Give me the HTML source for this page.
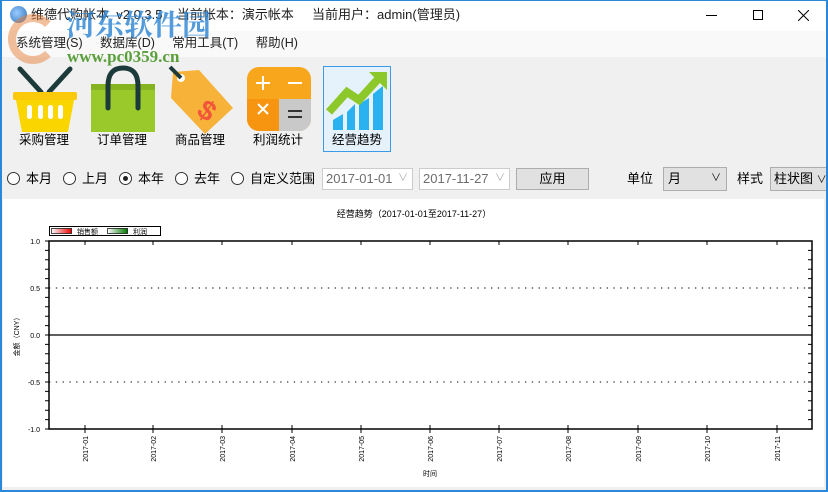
<!DOCTYPE html>
<html><head><meta charset="utf-8"><style>
*{margin:0;padding:0;box-sizing:border-box}
body{width:828px;height:492px;overflow:hidden;background:#f0f0f0;font-family:"Liberation Sans","Noto Sans CJK SC",sans-serif;font-size:12px;color:#000;position:relative;line-height:1.2}
.abs{position:absolute;white-space:nowrap}
.title{left:0;top:0;width:828px;height:31px;background:#fff;border-top:1px solid #2b88d8}
.menu{left:1px;top:31px;width:826px;height:26px;background:#f9f9f9}
.tb{top:57px;left:1px;width:826px;height:102px;background:#f0f0f0}
.lbl{font-size:12.5px;text-align:center;width:70px}
.wm{font-family:"Liberation Serif","Noto Serif CJK SC",serif;font-weight:bold}
.radio{width:13px;height:13px;border:1px solid #333;border-radius:50%;background:#fff}
.t13{font-size:13px;line-height:16px}
.combo{height:22px;border:1px solid #ccc;background:#fff;color:#6d6d6d;font-size:13px;padding:2px 3px;line-height:16px}
.btn{border:1px solid #adadad;background:#e1e1e1;text-align:center;font-size:13px;line-height:16px}
</style></head><body>
<div class="abs title"></div>
<div class="abs" style="left:10px;top:6px;width:17px;height:17px;border-radius:50%;background:radial-gradient(circle at 40% 40%,#9cf,#2a6fb8)"></div>
<div class="abs" style="left:31px;top:7px;font-size:13px;color:#222">维德代购帐本&nbsp; v2.0.3.5&nbsp;&nbsp;&nbsp; 当前帐本：演示帐本&nbsp;&nbsp;&nbsp;&nbsp; 当前用户：admin(管理员)</div>
<div class="abs" style="left:706px;top:15px;width:11px;height:1px;background:#000"></div>
<div class="abs" style="left:753px;top:10px;width:10px;height:10px;border:1px solid #000"></div>
<svg class="abs" style="left:798px;top:10px" width="11" height="11"><path d="M0 0L11 11M11 0L0 11" stroke="#000" stroke-width="1"/></svg>
<div class="abs menu"></div>
<div class="abs" style="left:16px;top:36px;font-size:12.5px;color:#222">系统管理(S)&nbsp;&nbsp;&nbsp;&nbsp; 数据库(D)&nbsp;&nbsp;&nbsp;&nbsp; 常用工具(T)&nbsp;&nbsp;&nbsp;&nbsp; 帮助(H)</div>
<div class="abs tb"></div>
<!-- watermark -->
<div class="abs" style="left:8px;top:14px;width:50px;height:50px;border-radius:50%;border:8px solid rgba(230,130,60,.5);border-right-color:transparent"></div>
<div class="abs wm" style="left:66px;top:10px;font-size:29px;line-height:32px;color:rgba(40,130,210,.8)">河东软件园</div>
<div class="abs wm" style="left:67px;top:48px;font-size:17px;line-height:18px;color:#5aa03a">www.pc0359.cn</div>
<!-- icons -->
<svg class="abs" style="left:10px;top:64px" width="70" height="70">
<path d="M10 5 L31 28 M60 5 L39 28" stroke="#1d3a3a" stroke-width="5" stroke-linecap="round"/>
<rect x="3" y="28" width="64" height="8" rx="2" fill="#f9c90a"/>
<path d="M6 36 H64 L58 68 H12 Z" fill="#fbd500"/>
<rect x="17" y="41" width="5" height="14" rx="2.5" fill="#fff"/><rect x="28" y="41" width="5" height="14" rx="2.5" fill="#fff"/><rect x="38" y="41" width="5" height="14" rx="2.5" fill="#fff"/><rect x="48" y="41" width="5" height="14" rx="2.5" fill="#fff"/>
</svg>
<svg class="abs" style="left:90px;top:64px" width="66" height="70">
<rect x="1" y="20" width="64" height="48" fill="#99c92b"/><rect x="1" y="20" width="64" height="6" fill="#86b320"/>
<path d="M18 44 V22 Q18 4 33 4 Q48 4 48 22 V44" fill="none" stroke="#1d3a3a" stroke-width="5" stroke-linecap="round"/>
</svg>
<svg class="abs" style="left:165px;top:64px" width="70" height="72">
<path d="M8 8 L34 6 L68 44 L40 70 L6 34 Z" fill="#f7b23a"/>
<circle cx="16" cy="14" r="4" fill="#fff"/><path d="M5 3 L16 14" stroke="#1d3a3a" stroke-width="4"/>
<text x="37" y="52" font-size="28" font-weight="bold" fill="#f3553a" transform="rotate(35 37 40)" font-family="Liberation Sans">$</text>
</svg>
<svg class="abs" style="left:247px;top:67px" width="64" height="64">
<defs><clipPath id="c"><rect width="64" height="64" rx="12"/></clipPath></defs>
<g clip-path="url(#c)"><rect width="64" height="64" fill="#f8a61c"/><rect x="32" y="32" width="32" height="32" fill="#c9c9c9"/><rect x="0" y="32" width="32" height="32" fill="#f79410"/></g>
<path d="M16 9 V23 M9 16 H23 M41 16 H55 M11 37 L21 47 M21 37 L11 47" stroke="#fff" stroke-width="2"/>
<path d="M41 44 H55 M41 50 H55" stroke="#333" stroke-width="2"/>
</svg>
<div class="abs" style="left:323px;top:66px;width:68px;height:86px;border:1px solid #3c9ae6;background:#e5f1fb"></div>
<svg class="abs" style="left:325px;top:68px" width="66" height="64">
<path d="M22 62 V44 L30 36 V62Z M34 62 V36 L44 30 V62Z M48 62 V26 L58 18 V62Z M8 62 V52 L18 46 V62Z" fill="#2ab2f0"/>
<path d="M4 44 L22 24 L34 32 L54 10" fill="none" stroke="#8cc82a" stroke-width="8"/>
<path d="M44 4 H62 V22 Z" fill="#8cc82a"/>
</svg>
<div class="abs lbl" style="left:9px;top:133px">采购管理</div>
<div class="abs lbl" style="left:87px;top:133px">订单管理</div>
<div class="abs lbl" style="left:165px;top:133px">商品管理</div>
<div class="abs lbl" style="left:243px;top:133px">利润统计</div>
<div class="abs lbl" style="left:322px;top:133px">经营趋势</div>
<!-- filter row -->
<div class="abs radio" style="left:7px;top:172px"></div><div class="abs t13" style="left:26px;top:171px">本月</div>
<div class="abs radio" style="left:63px;top:172px"></div><div class="abs t13" style="left:82px;top:171px">上月</div>
<div class="abs radio" style="left:119px;top:172px"></div><div class="abs" style="left:123px;top:176px;width:5px;height:5px;border-radius:50%;background:#222"></div><div class="abs t13" style="left:138px;top:171px">本年</div>
<div class="abs radio" style="left:175px;top:172px"></div><div class="abs t13" style="left:194px;top:171px">去年</div>
<div class="abs radio" style="left:231px;top:172px"></div><div class="abs t13" style="left:250px;top:171px">自定义范围</div>
<div class="abs combo" style="left:322px;top:168px;width:91px">2017-01-01 <span style="position:absolute;right:4px;top:2px;color:#aaa;font-size:10px">∨</span></div>
<div class="abs combo" style="left:419px;top:168px;width:91px">2017-11-27 <span style="position:absolute;right:4px;top:2px;color:#aaa;font-size:10px">∨</span></div>
<div class="abs btn" style="left:516px;top:168px;width:73px;height:22px;padding-top:2px">应用</div>
<div class="abs t13" style="left:627px;top:171px">单位</div>
<div class="abs btn" style="left:663px;top:167px;width:64px;height:24px;text-align:left;padding:3px 4px">月<span style="position:absolute;right:5px;top:3px;font-size:10px">∨</span></div>
<div class="abs t13" style="left:737px;top:171px">样式</div>
<div class="abs btn" style="left:770px;top:167px;width:62px;height:24px;text-align:left;padding:3px 3px">柱状图 <span style="font-size:10px">∨</span></div>
<!-- chart -->
<div class="abs" style="left:3px;top:199px;width:821px;height:288px;background:#fff"></div>
<svg class="abs" style="left:0;top:0" width="828" height="492" font-family="Liberation Sans,Noto Sans CJK SC,sans-serif">
<text x="414" y="217" font-size="9" text-anchor="middle">经营趋势（2017-01-01至2017-11-27）</text>
<rect x="49.5" y="226.5" width="111" height="9" fill="#fff" stroke="#000"/>
<defs><linearGradient id="r"><stop offset="0" stop-color="#fff"/><stop offset="1" stop-color="#e00"/></linearGradient><linearGradient id="g"><stop offset="0" stop-color="#fff"/><stop offset="1" stop-color="#070"/></linearGradient></defs>
<rect x="51.5" y="228.5" width="20" height="5" fill="url(#r)" stroke="#000" stroke-width=".7"/>
<text x="77" y="234" font-size="7">销售额</text>
<rect x="107.5" y="228.5" width="20" height="5" fill="url(#g)" stroke="#000" stroke-width=".7"/>
<text x="133" y="234" font-size="7">利润</text>
<rect x="49" y="241" width="763" height="188" fill="none" stroke="#000" stroke-width="1.5"/>
<line x1="49" y1="335" x2="812" y2="335" stroke="#000" stroke-width="1.3"/>
<line x1="49" y1="288" x2="812" y2="288" stroke="#000" stroke-dasharray="1.3 5.5"/>
<line x1="49" y1="382" x2="812" y2="382" stroke="#000" stroke-dasharray="1.3 5.5"/>
<g stroke="#000" stroke-width="1">
<path d="M45 250.4h4M45 259.8h4M45 269.2h4M45 278.6h4M45 288h4M45 297.4h4M45 306.8h4M45 316.2h4M45 325.6h4M45 335h4M45 344.4h4M45 353.8h4M45 363.2h4M45 372.6h4M45 382h4M45 391.4h4M45 400.8h4M45 410.2h4M45 419.6h4M45 241h4M45 429h4"/>
<path d="M808 250.4h4M808 259.8h4M808 269.2h4M808 278.6h4M808 288h4M808 297.4h4M808 306.8h4M808 316.2h4M808 325.6h4M808 335h4M808 344.4h4M808 353.8h4M808 363.2h4M808 372.6h4M808 382h4M808 391.4h4M808 400.8h4M808 410.2h4M808 419.6h4"/>
<path d="M85 241v4M153 241v4M222 241v4M292 241v4M361 241v4M430 241v4M499 241v4M568 241v4M638 241v4M707 241v4M777 241v4"/>
<path d="M85 425v8M153 425v8M222 425v8M292 425v8M361 425v8M430 425v8M499 425v8M568 425v8M638 425v8M707 425v8M777 425v8"/>
</g>
<g font-size="7" text-anchor="end">
<text x="40" y="244">1.0</text><text x="40" y="291">0.5</text><text x="40" y="338">0.0</text><text x="40" y="385">-0.5</text><text x="40" y="432">-1.0</text>
</g>
<g font-size="7" text-anchor="end">
<text transform="translate(88,436) rotate(-90)">2017-01</text>
<text transform="translate(156,436) rotate(-90)">2017-02</text>
<text transform="translate(225,436) rotate(-90)">2017-03</text>
<text transform="translate(295,436) rotate(-90)">2017-04</text>
<text transform="translate(364,436) rotate(-90)">2017-05</text>
<text transform="translate(433,436) rotate(-90)">2017-06</text>
<text transform="translate(502,436) rotate(-90)">2017-07</text>
<text transform="translate(571,436) rotate(-90)">2017-08</text>
<text transform="translate(641,436) rotate(-90)">2017-09</text>
<text transform="translate(710,436) rotate(-90)">2017-10</text>
<text transform="translate(780,436) rotate(-90)">2017-11</text>
</g>
<text transform="translate(19,335) rotate(-90)" font-size="7" text-anchor="middle">金额（CNY）</text>
<text x="430" y="476" font-size="7" text-anchor="middle">时间</text>
</svg>
<div class="abs" style="left:0;top:0;width:2px;height:492px;background:#2b88d8"></div>
<div class="abs" style="right:0;top:0;width:2px;height:492px;background:#2b88d8"></div>
<div class="abs" style="left:0;bottom:0;width:828px;height:2px;background:#2b88d8"></div>
</body></html>
